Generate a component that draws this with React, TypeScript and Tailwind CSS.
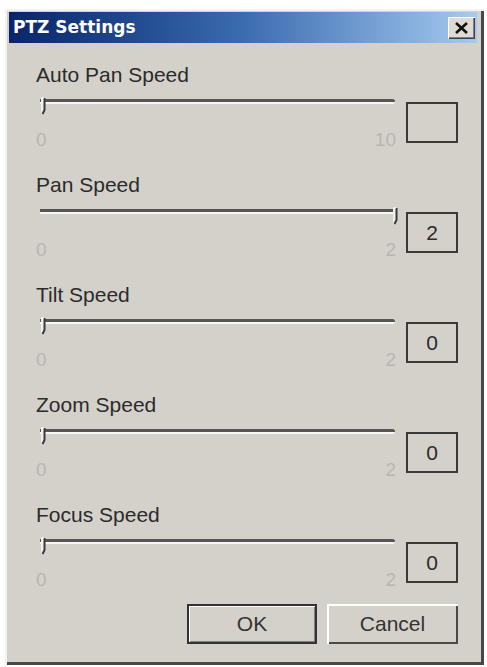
import React from "react";

type Row = { label: string; min: number; max: number; value: number | null };

const rows: Row[] = [
  { label: "Auto Pan Speed", min: 0, max: 10, value: null },
  { label: "Pan Speed", min: 0, max: 2, value: 2 },
  { label: "Tilt Speed", min: 0, max: 2, value: 0 },
  { label: "Zoom Speed", min: 0, max: 2, value: 0 },
  { label: "Focus Speed", min: 0, max: 2, value: 0 },
];

function Thumb() {
  return (
    <svg width="7" height="18" viewBox="0 0 7 18">
      <path d="M1 1 H4.5 V13 L2.5 17 H1 Z" fill="#f2f0ec" />
      <path d="M4.5 1 V13 L2.5 17" stroke="#3a3a3a" strokeWidth="2" fill="none" />
      <path d="M1 1 H4" stroke="#ffffff" strokeWidth="1" fill="none" />
    </svg>
  );
}

function SliderRow({ row }: { row: Row }) {
  const v = row.value ?? row.min;
  const frac = (v - row.min) / (row.max - row.min);
  return (
    <div className="flex h-[87px] flex-col">
      <div className="h-[24px] text-[21px] leading-[24px] text-[#2b2b2b]">{row.label}</div>
      <div className="mt-[10px] flex items-start gap-[10px]">
        <div className="flex w-[360px] flex-col">
          <div className="relative h-[20px] pt-[2px]">
            <div className="ml-[4px] mr-[1px] h-[5px] rounded-r-full border-t-[3px] border-b-2 border-t-[#565656] border-b-[#f7f7f5]" />
            <div className="absolute top-0" style={{ left: 4 + frac * 352 }}>
              <Thumb />
            </div>
          </div>
          <div className="mt-[13px] flex h-[20px] justify-between text-[19px] leading-[20px] text-[#b9b6b0]">
            <span>{row.min}</span>
            <span>{row.max}</span>
          </div>
        </div>
        <div className="mt-[5px] flex h-[41px] w-[52px] items-center justify-center border-2 border-[#3a3a3a] text-[21px] text-[#2b2b2b]">
          {row.value !== null ? row.value : ""}
        </div>
      </div>
    </div>
  );
}

export default function App() {
  return (
    <div className="h-[667px] w-[487px] bg-white pl-[5px] pt-[9px]" style={{ fontFamily: '"Liberation Sans", Arial, sans-serif' }}>
      <div className="flex h-[656px] w-[479px] flex-col bg-[#d4d1cb] pl-[4px] pr-[7px] pt-[3px] shadow-[inset_2px_2px_0_#f3f3f1,inset_-3px_-3px_0_#474747]">
        <div className="flex h-[31px] items-center justify-between bg-linear-to-r from-[#0a246a] via-[#3a6cb0] to-[#a6caf0] pl-[4px] pr-[2px]">
          <span className="text-[17px] font-bold text-white" style={{ fontFamily: '"DejaVu Sans", sans-serif' }}>
            PTZ Settings
          </span>
          <div className="flex h-[22px] w-[27px] items-center justify-center bg-[#dedbd6] shadow-[inset_1px_1px_0_#ffffff,inset_-1px_-1px_0_#404040,inset_-2px_-2px_0_#808080]">
            <svg width="15" height="12" viewBox="0 0 15 12">
              <path d="M2 1 L13 11 M13 1 L2 11" stroke="#111" strokeWidth="2.6" />
            </svg>
          </div>
        </div>
        <div className="flex flex-col pl-[27px] pr-[19px] pt-[20px]">
          <div className="flex flex-col gap-[23px]">
            {rows.map((r) => (
              <SliderRow key={r.label} row={r} />
            ))}
          </div>
          <div className="mt-[14px] flex justify-end gap-[10px]">
            <button className="flex h-[40px] w-[130px] items-center justify-center border-2 border-[#333] bg-[#d4d1cb] text-[21px] text-[#333] shadow-[inset_1px_1px_0_#ffffff,inset_-1px_-1px_0_#808080]">
              OK
            </button>
            <button className="flex h-[40px] w-[131px] items-center justify-center bg-[#d4d1cb] text-[21px] text-[#333] shadow-[inset_2px_2px_0_#ffffff,inset_-2px_-2px_0_#4a4a4a]">
              Cancel
            </button>
          </div>
        </div>
      </div>
    </div>
  );
}
